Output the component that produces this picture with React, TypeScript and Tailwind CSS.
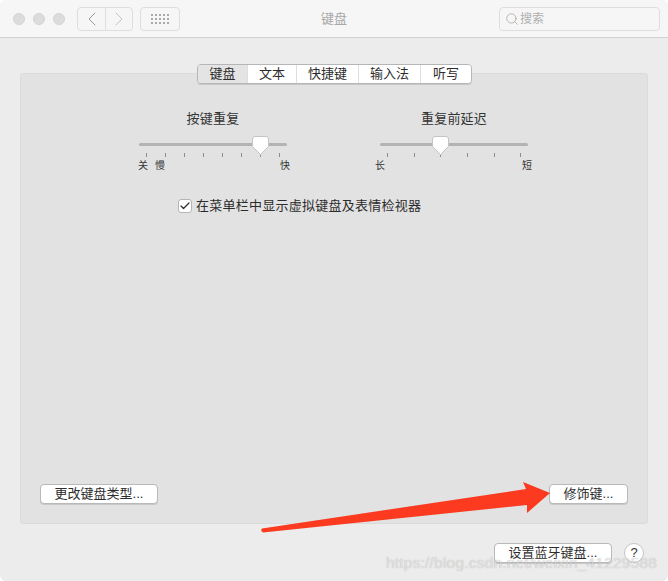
import React from 'react';
import { ChevronLeft, ChevronRight, Search, Check } from 'lucide-react';

const font = "font-['Liberation_Sans','Noto_Sans_CJK_SC',sans-serif]";

function Dots() {
  return (
    <div className="grid grid-cols-5 gap-[2px]">
      {Array.from({ length: 15 }).map((_, i) => (
        <span key={i} className="w-[2px] h-[2px] bg-[#a9a9a9]" />
      ))}
    </div>
  );
}

function Tab({ label, width, active, last }: { label: string; width: string; active?: boolean; last?: boolean }) {
  return (
    <div
      className={`h-full flex items-center justify-center text-[13px] text-[#2c2c2c] ${width} ${
        active ? 'bg-[#e4e4e4]' : 'bg-white'
      } ${last ? '' : 'border-r border-[#dedede]'}`}
    >
      {label}
    </div>
  );
}

function PushButton({ label, className }: { label: string; className: string }) {
  return (
    <button className={`h-[20px] flex items-center justify-center bg-white rounded-[4px] border border-[#b9b9b9] shadow-[0_1px_0_#c8c8c8] text-[13px] text-[#2c2c2c] ${className}`}>
      {label}
    </button>
  );
}

function Slider({ title, ticks, thumb, labels }: {
  title: string;
  ticks: number[];
  thumb: number;
  labels: { text: string; x: number }[];
}) {
  return (
    <div className="w-[148px] flex flex-col">
      <div className="h-[18px] flex items-center justify-center text-[13px] tracking-[0.2px] text-[#333] whitespace-nowrap">{title}</div>
      <div className="relative h-[23px] mt-[8px]">
        <div className="absolute left-0 right-0 top-[7px] h-[3px] rounded-full bg-[#b3b3b3]" />
        {ticks.map((x) => (
          <span key={x} className="absolute top-[17px] w-px h-[4px] bg-[#8f8f8f]" style={{ left: x }} />
        ))}
        <svg className="absolute top-0" style={{ left: thumb - 8 }} width="17" height="19" viewBox="0 0 17 19">
          <path
            d="M3 .5h11a2.5 2.5 0 0 1 2.500 2.500v7.500L8.500 18.500.5 10.500V3A2.500 2.500 0 0 1 3 .5z"
            fill="#fff"
            stroke="#c4c4c4"
          />
        </svg>
      </div>
      <div className="relative h-[14px]">
        {labels.map((l) => (
          <span
            key={l.text}
            className="absolute top-0 w-[12px] text-center text-[10px] leading-[14px] text-[#333]"
            style={{ left: l.x - 6 }}
          >
            {l.text}
          </span>
        ))}
      </div>
    </div>
  );
}

export default function App() {
  return (
    <div className={`relative w-[668px] h-[581px] overflow-hidden bg-white ${font}`}>
      <div className="h-full flex flex-col bg-[#ececec] rounded-[6px] overflow-hidden">
        <div className="h-[38px] shrink-0 flex items-center bg-[#f6f6f6] border-b border-[#d2d2d2] pl-[13px] pr-[8px]">
          <div className="flex gap-[8px]">
            <span className="w-[12px] h-[12px] rounded-full bg-[#dcdcdc] border border-[#d4d4d4]" />
            <span className="w-[12px] h-[12px] rounded-full bg-[#dcdcdc] border border-[#d4d4d4]" />
            <span className="w-[12px] h-[12px] rounded-full bg-[#dcdcdc] border border-[#d4d4d4]" />
          </div>
          <div className="flex ml-[12px]">
            <div className="w-[29px] h-[24px] flex items-center justify-center rounded-l-[4px] border border-[#dedede] bg-[#f6f6f6]">
              <ChevronLeft size={24} strokeWidth={1} className="text-[#9a9a9a]" />
            </div>
            <div className="w-[28px] h-[24px] -ml-px flex items-center justify-center rounded-r-[4px] border border-[#dedede] bg-[#f6f6f6]">
              <ChevronRight size={24} strokeWidth={1} className="text-[#c4c4c4]" />
            </div>
          </div>
          <div className="w-[40px] h-[24px] ml-[7px] flex items-center justify-center rounded-[4px] border border-[#dedede]">
            <Dots />
          </div>
          <div className="flex-1 text-center text-[13px] text-[#a8a8a8] pr-[11px]">键盘</div>
          <div className="w-[161px] h-[24px] flex items-center gap-[1px] pl-[5px] rounded-[4px] border border-[#dedede] text-[12px] text-[#b0b0b0]">
            <Search size={14} strokeWidth={1.25} className="text-[#a0a0a0]" />
            搜索
          </div>
        </div>

        <div className="flex-1 flex flex-col px-[20px] pt-[35px]">
          <div className="relative h-[451px] flex flex-col bg-[#e2e2e2] border border-[#dbdbdb] rounded-[3px]">
            <div className="absolute -top-[10px] left-[176px] h-[20px] flex overflow-hidden rounded-[4px] border border-[#b6b6b6] shadow-[0_1px_0_#c8c8c8]">
              <Tab label="键盘" width="w-[50px]" active />
              <Tab label="文本" width="w-[49px]" />
              <Tab label="快捷键" width="w-[62px]" />
              <Tab label="输入法" width="w-[62px]" />
              <Tab label="听写" width="w-[50px]" last />
            </div>

            <div className="flex pl-[118px] gap-[93px] pt-[36px]">
              <Slider
                title="按键重复"
                ticks={[7, 26, 45, 64, 83, 102, 121, 140]}
                thumb={121}
                labels={[
                  { text: '关', x: 4 },
                  { text: '慢', x: 21 },
                  { text: '快', x: 146 },
                ]}
              />
              <Slider
                title="重复前延迟"
                ticks={[7, 34, 60, 87, 114, 140]}
                thumb={60}
                labels={[
                  { text: '长', x: 0 },
                  { text: '短', x: 147 },
                ]}
              />
            </div>

            <div className="flex items-center gap-[4px] pl-[157px] mt-[23px] text-[13px] tracking-[0.25px] text-[#2c2c2c]">
              <span className="w-[14px] h-[14px] flex items-center justify-center bg-white rounded-[3px] border border-[#b4b4b4]">
                <Check size={12} strokeWidth={2.5} className="text-[#2f2f2f]" />
              </span>
              在菜单栏中显示虚拟键盘及表情检视器
            </div>

            <div className="mt-auto flex justify-between pl-[19px] pr-[19px] pb-[19px]">
              <PushButton label="更改键盘类型..." className="w-[118px]" />
              <PushButton label="修饰键..." className="w-[79px]" />
            </div>
          </div>

          <div className="flex justify-end items-center mt-[19px] pr-[4px] gap-[12px]">
            <PushButton label="设置蓝牙键盘..." className="w-[118px]" />
            <div className="w-[20px] h-[20px] flex items-center justify-center rounded-full bg-white border border-[#c4c4c4] text-[13px] text-[#333]">
              ?
            </div>
          </div>
        </div>
      </div>

      {/* annotation pasted over the screenshot */}
      <svg className="absolute inset-0 pointer-events-none" width="668" height="581" viewBox="0 0 668 581">
        <path
          d="M262 528.500 L526 489 L523 482 L550 493 L527 513 L527 505 L263 532.500 Q260 530.500 262 528.500z"
          fill="#fb3a1f"
        />
      </svg>
      <div className="absolute left-[386px] top-[553px] text-[15.500px] leading-[20px] tracking-[0.2px] text-white/60 [text-shadow:0_0_1px_rgba(0,0,0,0.3)] whitespace-nowrap pointer-events-none">
        https://blog.csdn.net/weixin_41229588
      </div>
    </div>
  );
}
